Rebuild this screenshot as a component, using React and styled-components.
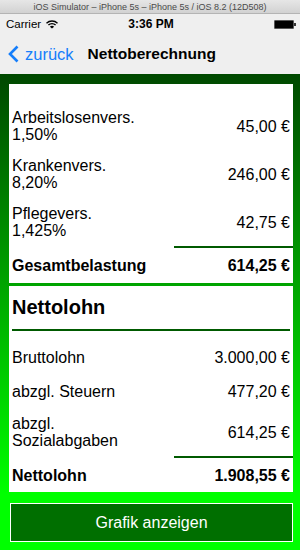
import React from 'react';
import styled, { createGlobalStyle } from 'styled-components';

const GlobalStyle = createGlobalStyle`
    html, body {
        margin: 0;
        padding: 0;
        background: #ffffff;
    }
    body {
        font-family: "Liberation Sans", Arial, sans-serif;
        color: #000;
    }
`;

const Screen = styled.div`
    width: 300px;
    height: 550px;
    display: flex;
    flex-direction: column;
    overflow: hidden;
`;

const TitleBar = styled.div`
    height: 13px;
    display: flex;
    align-items: center;
    justify-content: center;
    background: linear-gradient(#e6e6e6, #d2d2d2);
    border-bottom: 1px solid #b4b4b4;
    font-size: 9px;
    color: #4a4a4a;
    white-space: nowrap;
`;

const StatusBar = styled.div`
    height: 20px;
    display: grid;
    grid-template-columns: 1fr auto 1fr;
    align-items: center;
    padding: 0 4px 0 6px;
    background: #efefef;
    font-size: 11.5px;
`;

const Carrier = styled.div`
    display: flex;
    align-items: center;
    gap: 5px;
`;

const Clock = styled.div`
    font-weight: bold;
    font-size: 12px;
`;

const Battery = styled.div`
    justify-self: end;
    display: flex;
    align-items: center;
`;

const BatteryBody = styled.div`
    width: 18px;
    height: 7px;
    background: #000;
    border: 1px solid #555;
    border-radius: 1px;
`;

const BatteryNub = styled.div`
    width: 2px;
    height: 3px;
    background: #333;
`;

const NavBar = styled.div`
    height: 40px;
    display: flex;
    align-items: center;
    padding-left: 8px;
    background: #efefef;
`;

const BackButton = styled.div`
    display: flex;
    align-items: center;
    gap: 6px;
    color: #157efb;
    font-size: 16.5px;
`;

const NavTitle = styled.div`
    margin-left: 14px;
    font-size: 15.5px;
    font-weight: bold;
`;

const Content = styled.div`
    flex: 1;
    display: flex;
    flex-direction: column;
    padding: 10px 7px 8px 9px;
    background: linear-gradient(#004800 0%, #00ff00 88%);
`;

const Panel = styled.div`
    background: #ffffff;
    padding-top: ${(p) => p.$top || 0}px;
    margin-bottom: ${(p) => p.$gap || 0}px;
    display: flex;
    flex-direction: column;
`;

const Row = styled.div`
    height: ${(p) => p.$h}px;
    display: flex;
    align-items: center;
    justify-content: space-between;
    padding: 0 3px;
    font-size: 16px;
    line-height: 17px;
    font-weight: ${(p) => (p.$bold ? 'bold' : 'normal')};
`;

const Label = styled.div`
    white-space: pre-line;
`;

const Amount = styled.div`
    white-space: nowrap;
`;

const SumRule = styled.div`
    align-self: flex-end;
    width: 119px;
    height: 2px;
    background: #005a00;
`;

const Heading = styled.div`
    height: 43px;
    display: flex;
    align-items: center;
    padding-left: 3px;
    font-size: 20px;
    font-weight: bold;
`;

const HeadRule = styled.div`
    height: 2px;
    margin: 0 3px 9px;
    background: #005a00;
`;

const ChartButton = styled.button`
    height: 39px;
    margin-left: 1px;
    border: 1px solid #ffffff;
    background: #006f00;
    color: #ffffff;
    font-family: "Liberation Sans", Arial, sans-serif;
    font-size: 16px;
    padding: 0;
    cursor: pointer;
`;

const Wifi = () => (
    <svg width="12" height="9" viewBox="0 0 12 9">
        <path d="M0.5 3.2 A8 8 0 0 1 11.5 3.2" fill="none" stroke="#000" strokeWidth="1.4" />
        <path d="M2.4 5.1 A5.3 5.3 0 0 1 9.6 5.1" fill="none" stroke="#000" strokeWidth="1.4" />
        <path d="M6 8.6 L3.9 6.7 A3 3 0 0 1 8.1 6.7 Z" fill="#000" />
    </svg>
);

const Chevron = () => (
    <svg width="11" height="18" viewBox="0 0 11 18">
        <polyline points="9.5,1.5 2,9 9.5,16.5" fill="none" stroke="#157efb" strokeWidth="2.6" />
    </svg>
);

const social = [
    { label: 'Arbeitslosenvers.\n1,50%', value: '45,00 €' },
    { label: 'Krankenvers.\n8,20%', value: '246,00 €' },
    { label: 'Pflegevers.\n1,425%', value: '42,75 €' },
];

const App = () => {
    return (
        <>
            <GlobalStyle />
            <Screen>
                <TitleBar>iOS Simulator – iPhone 5s – iPhone 5s / iOS 8.2 (12D508)</TitleBar>
                <StatusBar>
                    <Carrier>
                        Carrier <Wifi />
                    </Carrier>
                    <Clock>3:36 PM</Clock>
                    <Battery>
                        <BatteryBody />
                        <BatteryNub />
                    </Battery>
                </StatusBar>
                <NavBar>
                    <BackButton>
                        <Chevron />
                        zurück
                    </BackButton>
                    <NavTitle>Nettoberechnung</NavTitle>
                </NavBar>
                <Content>
                    <Panel $top={18} $gap={3}>
                        {social.map((item) => (
                            <Row $h={48} key={item.value}>
                                <Label>{item.label}</Label>
                                <Amount>{item.value}</Amount>
                            </Row>
                        ))}
                        <SumRule />
                        <Row $h={35} $bold>
                            <Label>Gesamtbelastung</Label>
                            <Amount>614,25 €</Amount>
                        </Row>
                    </Panel>
                    <Panel $gap={11}>
                        <Heading>Nettolohn</Heading>
                        <HeadRule />
                        <Row $h={34}>
                            <Label>Bruttolohn</Label>
                            <Amount>3.000,00 €</Amount>
                        </Row>
                        <Row $h={34}>
                            <Label>abzgl. Steuern</Label>
                            <Amount>477,20 €</Amount>
                        </Row>
                        <Row $h={48}>
                            <Label>{'abzgl.\nSozialabgaben'}</Label>
                            <Amount>614,25 €</Amount>
                        </Row>
                        <SumRule />
                        <Row $h={34} $bold>
                            <Label>Nettolohn</Label>
                            <Amount>1.908,55 €</Amount>
                        </Row>
                    </Panel>
                    <ChartButton type="button">Grafik anzeigen</ChartButton>
                </Content>
            </Screen>
        </>
    );
};

export default App;
